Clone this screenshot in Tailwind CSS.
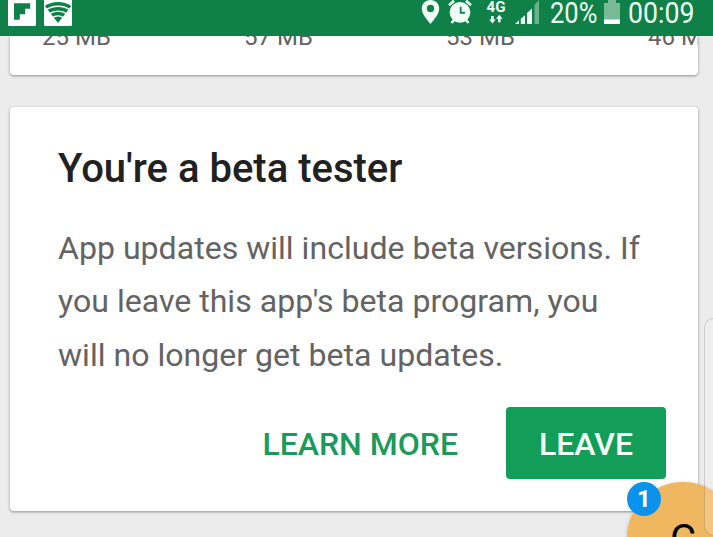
<!DOCTYPE html>
<html lang="en">
<head>
  <meta charset="UTF-8" />
  <meta name="viewport" content="width=device-width, initial-scale=1.0"/>
  <title>Beta tester</title>
  <script src="https://cdn.jsdelivr.net/npm/@tailwindcss/browser@4"></script>
</head>
<body class="relative h-screen overflow-hidden bg-[#ececec] font-['Roboto',sans-serif]">

  <!-- Status bar -->
  <header class="relative z-10 flex h-9 bg-[#0f8047] text-[#f0fff6]">
    <svg class="h-9 w-[400px] shrink-0" viewBox="0 0 400 36">
      <path d="M8 0h28v24.500a1.500 1.500 0 0 1-1.500 1.500h-25a1.500 1.500 0 0 1-1.500-1.500z" fill="#fff"/>
      <path d="M14 3.300h16.200v5.400h-5v5.600h-5.400v5.500h-5.800z" fill="#0f8047"/>
      <path d="M44 0h28v24.500a1.500 1.500 0 0 1-1.500 1.500h-25a1.500 1.500 0 0 1-1.500-1.500z" fill="#fff"/>
      <path d="M44.800 6C52 .8 64 .8 71.200 6L58 23z" fill="#0f8047"/>
      <path d="M46 10c6.500-5 18-5 24 0M49 13.900c5-3.700 13-3.700 18 0M52.500 17.800c3.200-2.400 7.800-2.400 11 0" fill="none" stroke="#fff" stroke-width="1.300"/>
    </svg>
    <svg class="h-9 w-[150px] shrink-0" viewBox="400 0 150 36" fill="currentColor">
      <!-- location -->
      <path fill-rule="evenodd" d="M430.500 0c-5.200 0-8.700 3.900-8.700 8.700 0 5.600 5.200 10.600 8.700 15.300 3.500-4.700 8.700-9.700 8.700-15.300 0-4.800-3.500-8.700-8.700-8.700zm0 4.800a3.700 3.700 0 1 1 0 7.400 3.700 3.700 0 0 1 0-7.400z"/>
      <!-- alarm -->
      <circle cx="460" cy="12.300" r="10.400"/>
      <path d="M449 5.200l5-4.500M471 5.200l-5-4.500M451.500 23l3-3.500M468.500 23l-3-3.500" stroke="currentColor" stroke-width="2.600"/>
      <path d="M460.700 6.800v6h4.300" fill="none" stroke="#0f8047" stroke-width="1.800"/>
      <!-- network -->
      <text x="486.500" y="11.500" font-size="14" font-weight="700" textLength="19" lengthAdjust="spacingAndGlyphs">4G</text>
      <path d="M491.100 16h2.600v3.500h2l-3.300 4-3.300-4h2zM498 22.300v-3.500h-2l3.300-4 3.300 4h-2v3.500z"/>
      <path d="M515 24l4-3.700v3.700zM520.800 18.800l4.200-3.600v8.800h-4.200zM527 13l5-4.500v15.500h-5z"/>
      <path d="M534.500 5l4.500-5v24h-4.500z" opacity=".4"/>
    </svg>
    <span class="mt-[-5px] w-[53px] shrink-0 origin-left scale-x-[.85] text-[30px] leading-9">20%</span>
    <svg class="h-9 w-[25px] shrink-0" viewBox="603 0 25 36">
      <path d="M604 3h4v-3h8v3h4v17h-16z" fill="#79b996"/>
      <path d="M604 19.500h16v4.500h-16z" fill="#fff"/>
    </svg>
    <span class="mt-[-5px] origin-left scale-x-[.89] text-[30px] leading-9">00:09</span>
  </header>

  <!-- App sizes, scrolled under the status bar -->
  <section class="ml-[10px] h-[39px] w-[688px] overflow-hidden rounded-b-[4px] bg-white shadow-[0_1px_3px_rgba(0,0,0,.4)]">
    <div class="mt-[-14px] grid w-[808px] grid-cols-4 pl-8 text-[24px] leading-[30px] text-[#626262]">
      <span>25 MB</span>
      <span class="pl-2">57 MB</span>
      <span class="pl-4">53 MB</span>
      <span class="pl-6">46 MB</span>
    </div>
  </section>

  <!-- Beta card -->
  <main class="mt-8 ml-[10px] h-[404px] w-[688px] rounded-[4px] bg-white px-12 pt-[38px] shadow-[0_1px_3px_rgba(0,0,0,.4)]">
    <h1 class="text-[40px] leading-[48px] font-medium text-[#212121]">You're a beta tester</h1>
    <p class="mt-[28.500px] text-[32.080px] leading-[53.500px] whitespace-nowrap text-[#636363]">
      App updates will include beta versions. If<br>
      you leave this app's beta program, you<br>
      will no longer get beta updates.
    </p>
    <div class="mt-[25px] -mr-4 flex justify-end text-[32px] font-medium">
      <button class="mr-12 pt-0.5 text-[#1a9a5b]">LEARN MORE</button>
      <button class="h-[72px] w-40 rounded-[4px] bg-[#129d58] pt-0.5 text-[#f5fff9]">LEAVE</button>
    </div>
  </main>

  <!-- Chat bubble -->
  <div class="absolute top-[482px] left-[627px] size-[112px] rounded-full bg-[#efb860] text-center text-[40px] text-black shadow-[0_1px_4px_rgba(0,0,0,.2)]">
    <span class="block pt-[28px]">C</span>
  </div>
  <div class="absolute top-[482px] left-[627px] flex size-[34px] items-center justify-center rounded-full bg-[#0b92ec] text-2xl font-bold text-white">1</div>

  <!-- Edge panel handle -->
  <div class="absolute top-[318px] left-[704px] h-[218px] w-6 rounded-[10px] border border-black/15 bg-white/20"></div>
</body>
</html>
